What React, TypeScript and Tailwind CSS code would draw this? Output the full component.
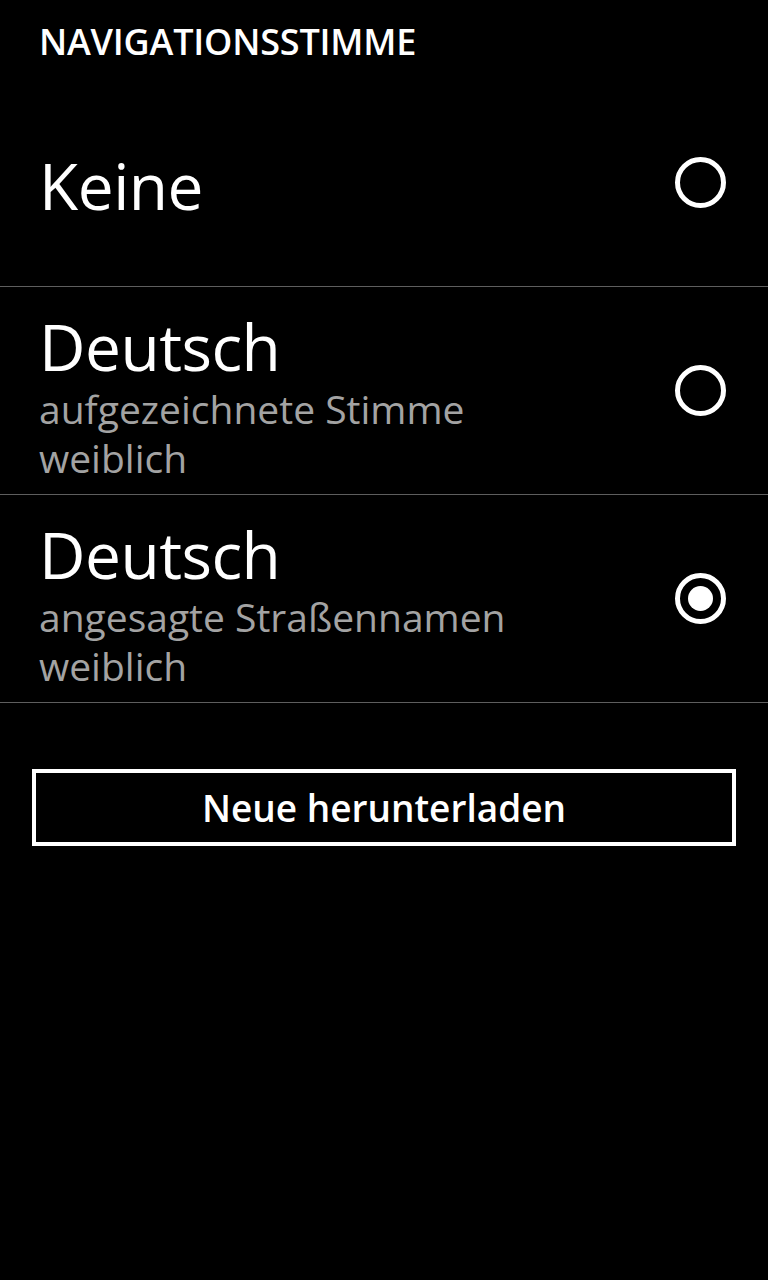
const voices = [
  { title: "Keine", lines: [] as string[], selected: false },
  { title: "Deutsch", lines: ["aufgezeichnete Stimme", "weiblich"], selected: false },
  { title: "Deutsch", lines: ["angesagte Straßennamen", "weiblich"], selected: true },
];

function Radio({ checked }: { checked: boolean }) {
  return (
    <span className="flex h-[51px] w-[51px] shrink-0 items-center justify-center rounded-full border-[5px] border-white">
      {checked && <span className="h-[25px] w-[25px] rounded-full bg-white" />}
    </span>
  );
}

export default function App() {
  return (
    <div className="min-h-[1280px] w-[768px] bg-black text-white font-['Open_Sans',sans-serif]">
      {/* Page title */}
      <div className="h-[79px] pl-[39px] pt-[20px]">
        <h1 className="text-[36px] font-semibold leading-[44px] tracking-[-0.2px]">NAVIGATIONSSTIMME</h1>
      </div>

      {/* Voice list */}
      <div>
        {voices.map((v, i) => (
          <div
            key={i}
            className="flex h-[208px] items-center justify-between border-b border-[#5e5e5e] pl-[39px] pr-[42px]"
          >
            <div className={`flex flex-col ${v.lines.length ? "pt-[13px]" : "pt-[8px]"}`}>
              <span className="text-[64px] leading-[70px] tracking-[-0.5px]">{v.title}</span>
              <div className="mt-[2px] flex flex-col">
                {v.lines.map((l) => (
                  <span key={l} className="text-[39px] leading-[49px] text-[#a3a3a3]">
                    {l}
                  </span>
                ))}
              </div>
            </div>
            <Radio checked={v.selected} />
          </div>
        ))}
      </div>

      {/* Download button */}
      <div className="px-[32px] pt-[66px]">
        <button className="flex h-[77px] w-full items-center justify-center border-[4px] border-white text-[37px] font-semibold">
          Neue herunterladen
        </button>
      </div>
    </div>
  );
}
